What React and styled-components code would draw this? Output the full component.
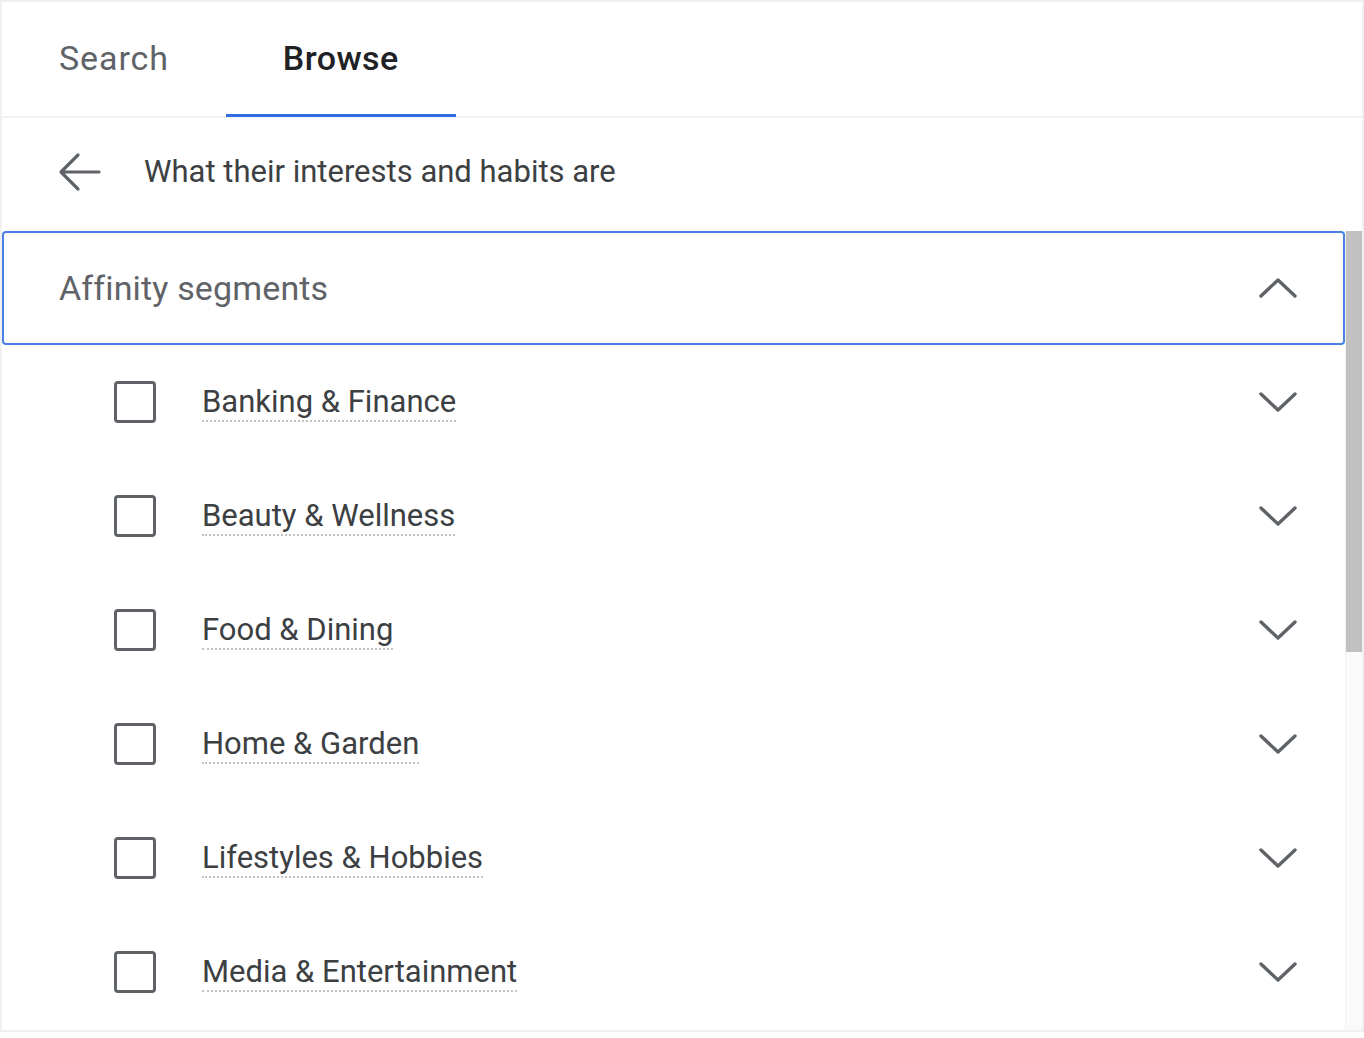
import React from "react";
import styled, { createGlobalStyle } from "styled-components";

const GlobalStyle = createGlobalStyle`
  html, body {
    margin: 0;
    padding: 0;
    background: #ffffff;
  }
  body {
    font-family: Roboto, "Liberation Sans", Arial, sans-serif;
    -webkit-font-smoothing: antialiased;
  }
`;

const segments = [
  "Banking & Finance",
  "Beauty & Wellness",
  "Food & Dining",
  "Home & Garden",
  "Lifestyles & Hobbies",
  "Media & Entertainment",
];

const Panel = styled.div`
  width: 1360px;
  height: 1028px;
  border: 2px solid #f0f0f0;
  display: flex;
  flex-direction: column;
  overflow: hidden;
  background: #fff;
`;

const TabBar = styled.div`
  display: flex;
  height: 114px;
  border-bottom: 2px solid #f1f1f1;
`;

const Tab = styled.div`
  padding: 0 57px;
  display: flex;
  align-items: center;
  justify-content: center;
  font-size: 34px;
  font-weight: ${({ $active }) => ($active ? 500 : 400)};
  color: ${({ $active }) => ($active ? "#202124" : "#5f6368")};
  letter-spacing: ${({ $active }) => ($active ? "0.4px" : "0.9px")};
  border-bottom: 3px solid ${({ $active }) => ($active ? "#2f6de1" : "transparent")};
  margin-bottom: -1px;
`;

const BackRow = styled.div`
  display: flex;
  align-items: center;
  height: 113px;
  padding: 0 0 6px 56px;
  box-sizing: border-box;
  gap: 42px;
  font-size: 31px;
  color: #3c4043;
`;

const ScrollArea = styled.div`
  flex: 1;
  display: flex;
  min-height: 0;
`;

const List = styled.div`
  width: 1343px;
  display: flex;
  flex-direction: column;
`;

const Track = styled.div`
  flex: 1;
  background: #fafafa;
  border-left: 1px solid #f3f3f3;
`;

const Thumb = styled.div`
  height: 421px;
  background: #c1c1c1;
`;

const GroupHeader = styled.div`
  height: 110px;
  border: 2px solid #4a7fe3;
  border-radius: 4px;
  display: flex;
  align-items: center;
  justify-content: space-between;
  padding: 0 46px 0 55px;
  font-size: 34px;
  color: #5f6368;
  letter-spacing: 0.15px;
`;

const Row = styled.div`
  height: 114px;
  display: flex;
  align-items: center;
  padding: 0 48px 0 112px;
`;

const Checkbox = styled.div`
  width: 36px;
  height: 36px;
  border: 3px solid #5f6368;
  border-radius: 4px;
  flex-shrink: 0;
`;

const Label = styled.span`
  margin: 2px 0 0 46px;
  font-size: 31px;
  color: #3c4043;
  padding-bottom: 0;
  border-bottom: 2px dotted #c4c4c4;
  line-height: 1.15;
`;

const Spacer = styled.div`
  flex: 1;
`;

const Chevron = ({ up }) => (
  <svg width="38" height="22" viewBox="0 0 38 22" fill="none">
    <polyline
      points={up ? "2,19 19,3 36,19" : "2,3 19,19 36,3"}
      stroke="#5f6368"
      strokeWidth="3.4"
      strokeLinecap="round"
      strokeLinejoin="round"
    />
  </svg>
);

const BackArrow = () => (
  <svg width="44" height="40" viewBox="0 0 44 40" fill="none">
    <path
      d="M41 20H4M20 3L3 20L20 37"
      stroke="#5f6368"
      strokeWidth="3.2"
      strokeLinecap="round"
      strokeLinejoin="round"
    />
  </svg>
);

const App = () => {
  return (
    <>
      <GlobalStyle />
      <Panel>
        <TabBar>
          <Tab>Search</Tab>
          <Tab $active>Browse</Tab>
        </TabBar>
        <BackRow>
          <BackArrow />
          <span>What their interests and habits are</span>
        </BackRow>
        <ScrollArea>
          <List>
            <GroupHeader>
              <span>Affinity segments</span>
              <Chevron up />
            </GroupHeader>
            {segments.map((s) => (
              <Row key={s}>
                <Checkbox />
                <Label>{s}</Label>
                <Spacer />
                <Chevron />
              </Row>
            ))}
          </List>
          <Track>
            <Thumb />
          </Track>
        </ScrollArea>
      </Panel>
    </>
  );
};

export default App;
